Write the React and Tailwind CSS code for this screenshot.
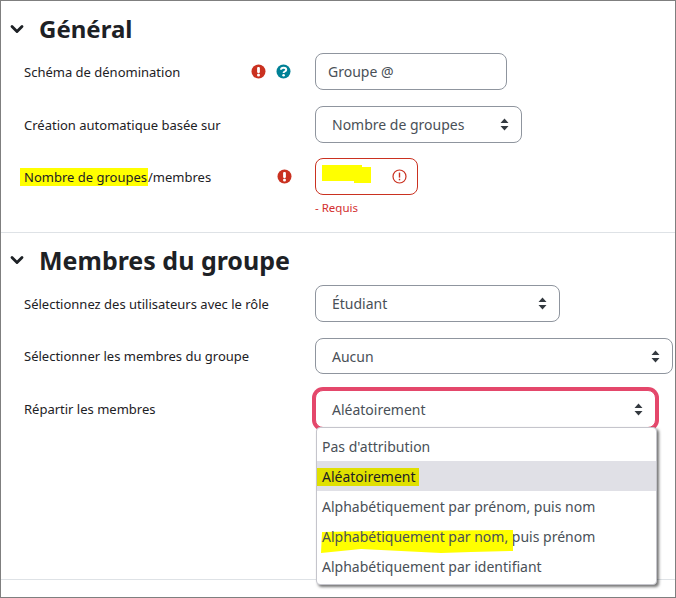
import { ChevronDown } from 'lucide-react'

const Updown = () => (
  <svg width="9" height="13" viewBox="0 0 9 13" className="shrink-0">
    <path d="M4.5 0.5 L8.5 5 H0.5 Z M0.5 8 H8.5 L4.5 12.5 Z" fill="#343a40" />
  </svg>
)

const Bang = () => (
  <svg width="15" height="15" viewBox="0 0 15 15">
    <circle cx="7.5" cy="7.5" r="7" fill="#ca3120" />
    <rect x="6.1" y="3" width="2.8" height="6" rx="1" fill="#fff" />
    <circle cx="7.5" cy="11" r="1.5" fill="#fff" />
  </svg>
)

const Help = () => (
  <svg width="15" height="15" viewBox="0 0 15 15">
    <circle cx="7.5" cy="7.5" r="7" fill="#008196" />
    <path d="M5 5.8 C5 3 10.2 3 10.2 5.8 C10.2 7.6 7.6 7.4 7.6 9" fill="none" stroke="#fff" strokeWidth="2" />
    <circle cx="7.6" cy="11.2" r="1.3" fill="#fff" />
  </svg>
)

const SectionHead = ({ title, size }) => (
  <div className="flex items-center h-[30px] pl-[6px]">
    <ChevronDown size={20} strokeWidth={3.4} className="text-[#1d2125]" />
    <h2 className={`ml-[12px] ${size} font-bold text-[#1d2125] leading-none`}>{title}</h2>
  </div>
)

const Select = ({ width, children, height = 'h-[37px]' }) => (
  <div className={`${width} ${height} flex items-center justify-between text-[14px] pl-[16px] pr-[12px] border border-[#8f959e] rounded-[8px] bg-white text-[#495057]`}>
    <span>{children}</span>
    <Updown />
  </div>
)

export default function App() {
  return (
    <div className="w-[676px] h-[598px] overflow-hidden bg-white border border-[#7f7f7f] text-[13px] text-[#1d2125]" style={{ fontFamily: '"Noto Sans", sans-serif' }}>
      {/* Général */}
      <div className="pt-[13px] h-[232px] border-b border-[#dee2e6]">
        <SectionHead title="Général" size="text-[24px]" />
        <div className="flex items-center h-[37px] mt-[9px] pl-[23px]">
          <span className="w-[227px] pt-[2px]">Schéma de dénomination</span>
          <span className="w-[25px] flex"><Bang /></span>
          <span className="w-[39px] flex"><Help /></span>
          <div className="w-[192px] h-[37px] flex items-center text-[14px] pl-[12px] border border-[#8f959e] rounded-[8px] text-[#495057]">Groupe @</div>
        </div>
        <div className="flex items-center h-[37px] mt-[16px] pl-[23px]">
          <span className="w-[291px] pt-[2px]">Création automatique basée sur</span>
          <Select width="w-[207px]">Nombre de groupes</Select>
        </div>
        <div className="flex items-center h-[37px] mt-[15px] pl-[19px]">
          <span className="w-[257px] pt-[2px]"><span className="bg-[#ffff00] pl-[4px] pr-px">Nombre de groupes</span>/membres</span>
          <span className="w-[38px] flex"><Bang /></span>
          <div className="w-[103px] h-[37px] flex items-center justify-between pl-[6px] pr-[10px] border border-[#ca3120] rounded-[8px]">
            <svg width="49" height="18" viewBox="0 0 49 18" className="mb-[6px]">
              <path d="M0 0 H40 V2 H49 V18 H32 V16 H0 Z" fill="#ffff00" />
            </svg>
            <svg width="15" height="15" viewBox="0 0 15 15">
              <circle cx="7.5" cy="7.5" r="6.5" fill="none" stroke="#ca3120" strokeWidth="1.2" />
              <rect x="6.8" y="3.6" width="1.4" height="5" fill="#ca3120" />
              <rect x="6.8" y="9.8" width="1.4" height="1.5" fill="#ca3120" />
            </svg>
          </div>
        </div>
        <div className="ml-[314px] mt-[5px] text-[11.5px] leading-[16px] text-[#d32f2f]">- Requis</div>
      </div>

      {/* Membres du groupe */}
      <div className="relative pt-[12px] h-[347px] border-b border-[#dee2e6]">
        <SectionHead title="Membres du groupe" size="text-[25px]" />
        <div className="flex items-center h-[37px] mt-[10px] pl-[23px]">
          <span className="w-[291px] pt-[2px]">Sélectionnez des utilisateurs avec le rôle</span>
          <Select width="w-[245px]">Étudiant</Select>
        </div>
        <div className="flex items-center h-[36px] mt-[16px] pl-[23px]">
          <span className="w-[291px] pt-px">Sélectionner les membres du groupe</span>
          <Select width="w-[358px]" height="h-[36px]">Aucun</Select>
        </div>
        <div className="flex items-center h-[38px] mt-[16px] pl-[23px]">
          <span className="w-[291px] pt-px">Répartir les membres</span>
          <div className="w-[341px] h-[38px] flex items-center justify-between text-[14px] pl-[16px] pr-[12px] rounded-[8px] bg-white text-[#495057] border border-[#e4476b] ring-[3px] ring-[#e4476b]">
            <span>Aléatoirement</span>
            <Updown />
          </div>
        </div>

        {/* open select list */}
        <div className="absolute left-[315px] top-[194px] w-[341px] h-[158px] pt-[3px] bg-white border border-[#c5c5cc] rounded-[4px] shadow-[2px_2px_3px_rgba(0,0,0,0.55)] text-[14px] text-[#495057]">
          <div className="h-[30px] flex items-center pl-[5px]">Pas d'attribution</div>
          <div className="h-[30px] flex items-center pt-px bg-[#e0e0e6] text-[#1d2125]"><span className="bg-[#e0e000] pl-[5px] pr-[3px] leading-[18px]">Aléatoirement</span></div>
          <div className="h-[30px] flex items-center pl-[5px]">Alphabétiquement par prénom, puis nom</div>
          <div className="h-[30px] flex items-center pl-[5px]">
            <span className="relative">
              <svg width="193" height="24" viewBox="0 0 193 24" className="absolute left-[-1px] top-[4px]">
                <path d="M1 2 L60 1 L192 0 L192 21 L150 22 L120 23 L80 21 L40 19 L0 23 Z" fill="#ffff00" />
              </svg>
              <span className="relative">Alphabétiquement par nom,</span>
            </span>
            &nbsp;puis prénom
          </div>
          <div className="h-[30px] flex items-center pl-[5px]">Alphabétiquement par identifiant</div>
        </div>
      </div>
    </div>
  )
}
